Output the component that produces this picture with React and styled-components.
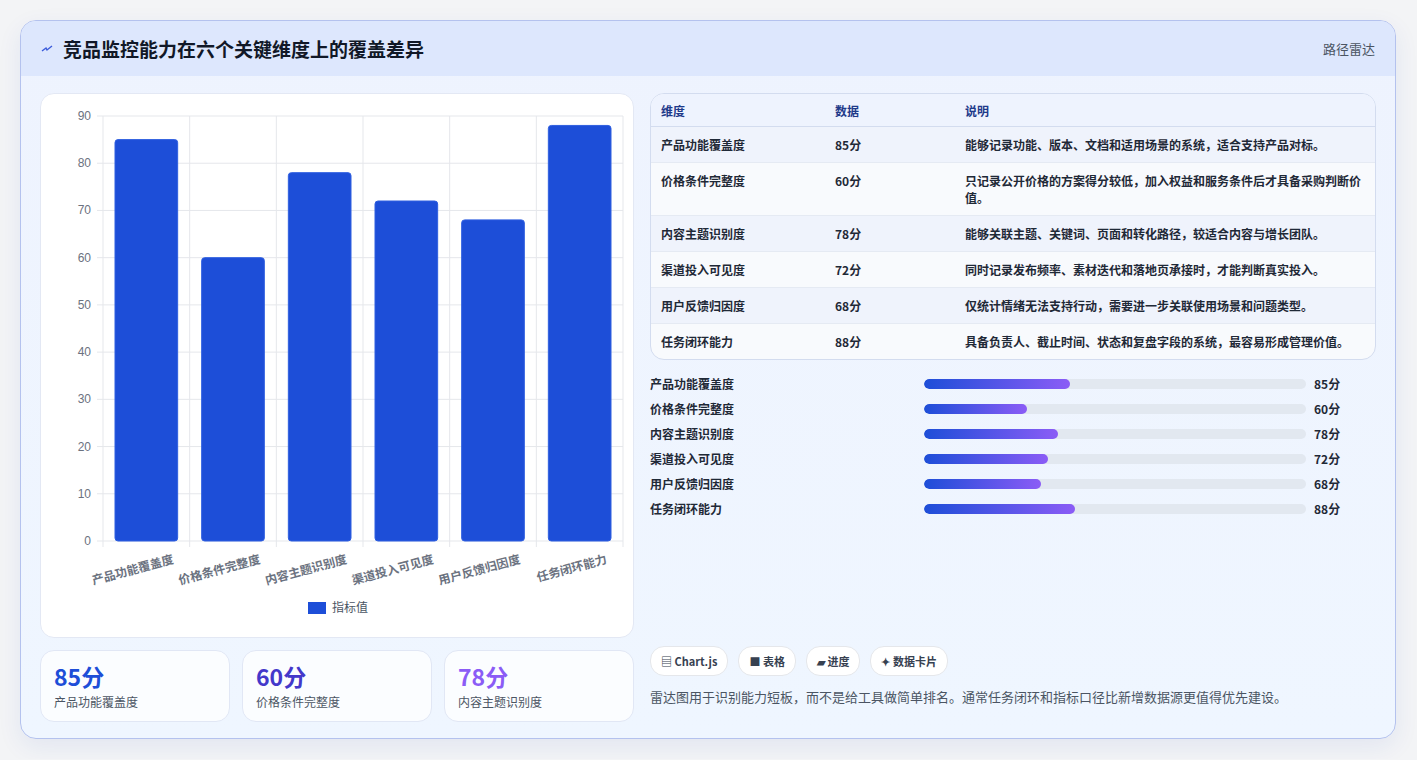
import React from 'react';
import styled, { createGlobalStyle } from 'styled-components';

const Global = createGlobalStyle`
  body { margin: 0; background: #f3f4f6; font-family: "Noto Sans CJK SC", "Noto Sans", sans-serif; }
`;

const data = [
  { name: '产品功能覆盖度', v: 85, note: '能够记录功能、版本、文档和适用场景的系统，适合支持产品对标。' },
  { name: '价格条件完整度', v: 60, note: '只记录公开价格的方案得分较低，加入权益和服务条件后才具备采购判断价值。' },
  { name: '内容主题识别度', v: 78, note: '能够关联主题、关键词、页面和转化路径，较适合内容与增长团队。' },
  { name: '渠道投入可见度', v: 72, note: '同时记录发布频率、素材迭代和落地页承接时，才能判断真实投入。' },
  { name: '用户反馈归因度', v: 68, note: '仅统计情绪无法支持行动，需要进一步关联使用场景和问题类型。' },
  { name: '任务闭环能力', v: 88, note: '具备负责人、截止时间、状态和复盘字段的系统，最容易形成管理价值。' },
];

const Page = styled.div`
  padding: 20px 20px 20px 20px;
`;
const Card = styled.div`
  width: 1376px; height: 719px; box-sizing: border-box;
  border: 1px solid #b4c2ee; border-radius: 16px; overflow: hidden;
  background: linear-gradient(180deg, #eef3fe 0%, #eff6ff 100%);
  box-shadow: 0 8px 24px rgba(30, 64, 175, 0.08);
  display: flex; flex-direction: column;
`;
const Header = styled.div`
  height: 55px; flex-shrink: 0; background: #dde7fd;
  display: flex; align-items: center; justify-content: space-between; padding: 0 20px;
`;
const Title = styled.h1`
  margin: 0; font-size: 19px; font-weight: 700; color: #111827;
  display: flex; align-items: center; gap: 10px;
`;
const Tag = styled.span` font-size: 13px; color: #4b5563; `;
const Body = styled.div`
  flex: 1; display: flex; gap: 16px; padding: 17px 19px 18px 19px;
`;
const Left = styled.div` width: 594px; display: flex; flex-direction: column; gap: 12px; `;
const ChartBox = styled.div`
  height: 543px; background: #fff; border: 1px solid #e3e8f4; border-radius: 14px;
`;
const Stats = styled.div` display: flex; gap: 12px; `;
const Stat = styled.div`
  width: 190px; height: 72px; box-sizing: border-box; padding: 10px 13px;
  background: rgba(255,255,255,0.75); border: 1px solid #e1e7f5; border-radius: 14px;
`;
const StatVal = styled.div` font-size: 23px; font-weight: 700; color: ${p => p.$c}; line-height: 30px; `;
const StatLabel = styled.div` font-size: 12px; color: #4b5563; margin-top: 2px; `;
const Right = styled.div` flex: 1; display: flex; flex-direction: column; `;
const Table = styled.table`
  width: 100%; border-collapse: separate; border-spacing: 0; font-size: 12px;
  border: 1px solid #d3dcef; border-radius: 14px; overflow: hidden; background: #f8fafd;
  th { text-align: left; font-weight: 700; color: #1e3a8a; background: #eef3fe; height: 32px; padding: 0 10px; border-bottom: 1px solid #d3dcef; }
  td { color: #1f2937; font-weight: 600; padding: 9px 10px; line-height: 17px; border-bottom: 1px solid #e5eaf3; vertical-align: top; }
  tr:nth-child(odd) td { background: #eff3fc; }
  tr:last-child td { border-bottom: none; }
`;
const Bars = styled.div` display: flex; flex-direction: column; margin-top: 11px; `;
const BarRow = styled.div` display: flex; align-items: center; height: 25px; font-size: 12px; font-weight: 600; color: #1f2937; `;
const BarName = styled.div` width: 274px; `;
const Track = styled.div` width: 382px; height: 10px; border-radius: 5px; background: #e2e8f0; overflow: hidden; `;
const Fill = styled.div` height: 100%; border-radius: 5px; background: linear-gradient(90deg, #1d4ed8, #8b5cf6); `;
const BarVal = styled.div` margin-left: 8px; `;
const Spacer = styled.div` flex: 1; `;
const Chips = styled.div` display: flex; gap: 10px; `;
const Chip = styled.span`
  height: 28px; padding: 0 10px; display: inline-flex; align-items: center; gap: 3px;
  background: #fff; border: 1px solid #e5e7eb; border-radius: 14px; font-size: 11px; font-weight: 700; color: #374151;
`;
const Foot = styled.p` margin: 11px 0 16px; font-size: 13px; color: #4b5563; `;

function Chart() {
  const x0 = 62, x1 = 582, yTop = 22, yBot = 447;
  const u = (yBot - yTop) / 90, cw = (x1 - x0) / 6;
  return (
    <svg width="594" height="543" fontFamily="'Liberation Sans', 'Noto Sans CJK SC', sans-serif">
      {Array.from({ length: 10 }, (_, i) => {
        const y = yBot - i * 10 * u;
        return (
          <g key={i}>
            <line x1={x0 - 6} x2={x1} y1={y} y2={y} stroke="#e5e7eb" />
            <text x={x0 - 12} y={y + 4} fontSize="12" fill="#6b7280" textAnchor="end">{i * 10}</text>
          </g>
        );
      })}
      {Array.from({ length: 7 }, (_, i) => (
        <line key={i} x1={x0 + i * cw} x2={x0 + i * cw} y1={yTop} y2={yBot + 6} stroke="#e5e7eb" />
      ))}
      {data.map((d, i) => {
        const h = d.v * u, x = x0 + i * cw + 12;
        return (
          <g key={d.name}>
            <rect x={x} y={yBot - h} width={cw - 24} height={h} rx="3" fill="#1d4ed8" stroke="#2f5fe0" />
            <text x={x0 + i * cw + cw / 2 + 28} y={yBot + 22} fontSize="12" fontWeight="700" fill="#6b7280"
              textAnchor="end" transform={`rotate(-15 ${x0 + i * cw + cw / 2 + 28} ${yBot + 22})`}>{d.name}</text>
          </g>
        );
      })}
      <rect x="267" y="508" width="18" height="12" fill="#1d4ed8" />
      <text x="291" y="518" fontSize="12" fill="#4b5563">指标值</text>
    </svg>
  );
}

export default function App() {
  return (
    <Page>
      <Global />
      <Card>
        <Header>
          <Title>
            <svg width="12" height="10" viewBox="0 0 12 10"><path d="M1 7 L5 4 L6 6 L11 2" stroke="#3b5bdb" strokeWidth="1.4" fill="none" /></svg>
            竞品监控能力在六个关键维度上的覆盖差异
          </Title>
          <Tag>路径雷达</Tag>
        </Header>
        <Body>
          <Left>
            <ChartBox><Chart /></ChartBox>
            <Stats>
              <Stat><StatVal $c="#1d4ed8">85分</StatVal><StatLabel>产品功能覆盖度</StatLabel></Stat>
              <Stat><StatVal $c="#4338ca">60分</StatVal><StatLabel>价格条件完整度</StatLabel></Stat>
              <Stat><StatVal $c="#8b5cf6">78分</StatVal><StatLabel>内容主题识别度</StatLabel></Stat>
            </Stats>
          </Left>
          <Right>
            <Table>
              <thead><tr><th style={{ width: 154 }}>维度</th><th style={{ width: 110 }}>数据</th><th>说明</th></tr></thead>
              <tbody>
                {data.map(d => (
                  <tr key={d.name}><td>{d.name}</td><td>{d.v}分</td><td>{d.note}</td></tr>
                ))}
              </tbody>
            </Table>
            <Bars>
              {data.map(d => (
                <BarRow key={d.name}>
                  <BarName>{d.name}</BarName>
                  <Track><Fill style={{ width: `${d.v * 0.45}%` }} /></Track>
                  <BarVal>{d.v}分</BarVal>
                </BarRow>
              ))}
            </Bars>
            <Spacer />
            <Chips>
              <Chip>▤ Chart.js</Chip>
              <Chip>■ 表格</Chip>
              <Chip>▰ 进度</Chip>
              <Chip>✦ 数据卡片</Chip>
            </Chips>
            <Foot>雷达图用于识别能力短板，而不是给工具做简单排名。通常任务闭环和指标口径比新增数据源更值得优先建设。</Foot>
          </Right>
        </Body>
      </Card>
    </Page>
  );
}
